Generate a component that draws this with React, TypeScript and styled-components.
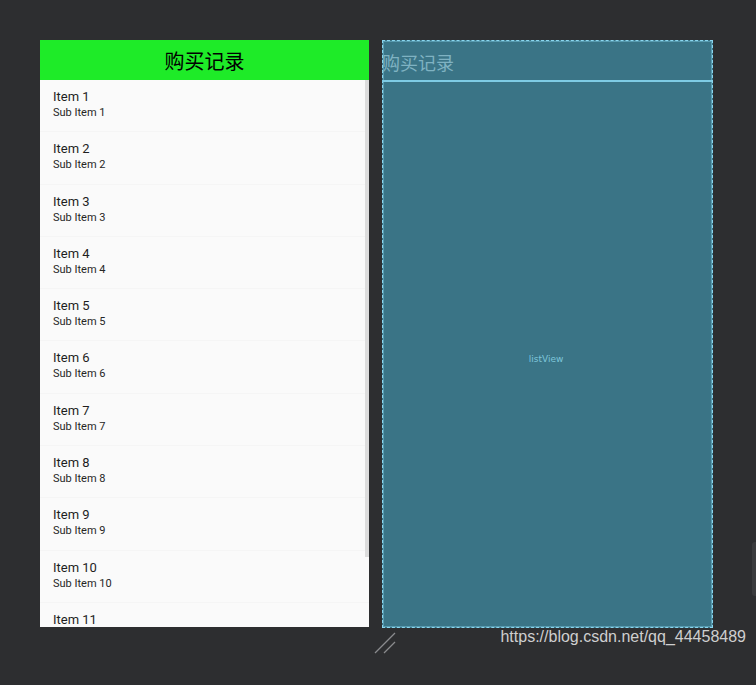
import styled, { createGlobalStyle } from "styled-components";

const GlobalStyle = createGlobalStyle`
  html, body {
    margin: 0;
    padding: 0;
    background: #2d2e30;
  }
  #root {
    width: 756px;
    height: 685px;
    overflow: hidden;
  }
`;

const items = Array.from({ length: 11 }, (_, i) => i + 1);

const App = () => {
  return (
    <>
      <GlobalStyle />
      <Canvas>
        <Screens>
          <Phone>
            <Header>购买记录</Header>
            <List>
              {items.map((n) => (
                <Row key={n}>
                  <Title>Item {n}</Title>
                  <Sub>Sub Item {n}</Sub>
                </Row>
              ))}
              <Scrollbar />
            </List>
          </Phone>
          <Blueprint>
            <BlueHeader>购买记录</BlueHeader>
            <BlueBody>listView</BlueBody>
          </Blueprint>
        </Screens>
        <Resize width={22} height={22} viewBox="0 0 22 22">
          <line x1="1" y1="21" x2="21" y2="1" stroke="#8a8b8d" strokeWidth="1.2" />
          <line x1="10" y1="21" x2="21" y2="10" stroke="#8a8b8d" strokeWidth="1.2" />
        </Resize>
        <Handle />
        <Watermark>https://blog.csdn.net/qq_44458489</Watermark>
      </Canvas>
    </>
  );
};

const Canvas = styled.div`
  position: relative;
  width: 756px;
  height: 685px;
  padding: 40px 0 0 40px;
  box-sizing: border-box;
`;

const Screens = styled.div`
  display: flex;
  gap: 13px;
  align-items: flex-start;
`;

const Phone = styled.div`
  width: 329px;
  height: 587px;
  background: #fafafa;
  display: flex;
  flex-direction: column;
  overflow: hidden;
`;

const Header = styled.div`
  height: 40px;
  flex-shrink: 0;
  background: #1eeb28;
  color: #000;
  font-family: "Noto Sans CJK SC", sans-serif;
  font-size: 20px;
  display: flex;
  align-items: center;
  justify-content: center;
`;

const List = styled.div`
  position: relative;
  flex: 1;
  overflow: hidden;
`;

const Row = styled.div`
  height: 52.3px;
  box-sizing: border-box;
  padding: 9px 13px 0;
  border-bottom: 1px solid #f5f5f5;
  font-family: Roboto, "Liberation Sans", sans-serif;
`;

const Title = styled.div`
  font-size: 13px;
  line-height: 16px;
  color: #1e1e1e;
`;

const Sub = styled.div`
  font-size: 11px;
  line-height: 16px;
  color: #262626;
`;

const Scrollbar = styled.div`
  position: absolute;
  top: 0;
  right: 0;
  width: 4px;
  height: 477px;
  background: #dcdcdc;
`;

const Blueprint = styled.div`
  width: 331px;
  height: 588px;
  box-sizing: border-box;
  background: #3a7486;
  border: 1px dashed #8ad6ef;
  box-shadow: inset 0 0 0 1px rgba(126, 203, 228, 0.45);
  display: flex;
  flex-direction: column;
`;

const BlueHeader = styled.div`
  height: 39px;
  flex-shrink: 0;
  border-bottom: 2px solid #7ecbe4;
  color: #7fb2c2;
  font-family: "Noto Sans CJK SC", sans-serif;
  font-size: 18px;
  line-height: 42px;
  margin-left: -1px;
`;

const BlueBody = styled.div`
  flex: 1;
  display: flex;
  align-items: center;
  justify-content: center;
  color: #7ec6da;
  font-family: "DejaVu Sans", sans-serif;
  font-size: 9px;
  padding-right: 3px;
  padding-top: 8px;
`;

const Resize = styled.svg`
  position: absolute;
  left: 374px;
  top: 632px;
`;

const Handle = styled.div`
  position: absolute;
  left: 752px;
  top: 542px;
  width: 10px;
  height: 54px;
  border-radius: 3px;
  background: #3a3b3d;
`;

const Watermark = styled.div`
  position: absolute;
  right: 10px;
  top: 627px;
  color: #cfcfcf;
  font-family: "Liberation Sans", Arial, sans-serif;
  font-size: 16px;
  line-height: 20px;
`;

export default App;
